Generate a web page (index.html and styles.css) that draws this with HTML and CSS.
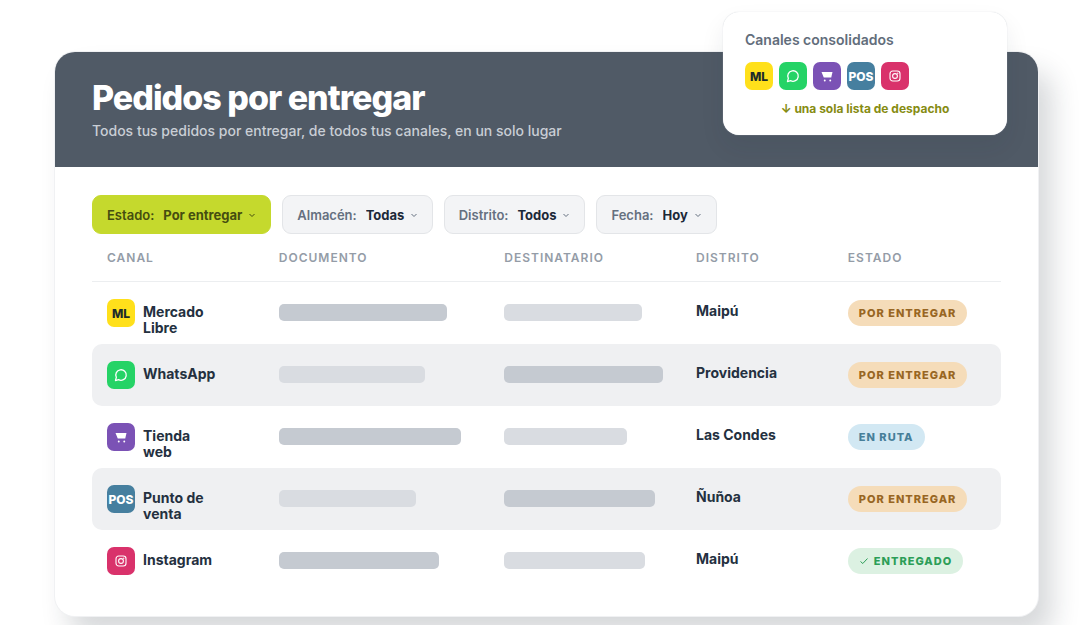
FILE: index.html
```html
<!DOCTYPE html>
<html lang="es">
<head>
    <meta charset="UTF-8">
    <meta name="viewport" content="width=device-width, initial-scale=1">
    <title>Pedidos por entregar</title>
    <link rel="stylesheet" href="styles.css">
</head>
<body>

<!-- iconos compartidos -->
<svg class="sprite" aria-hidden="true">
    <symbol id="chat" viewBox="0 0 24 24">
        <path d="M7.900 20A9 9 0 1 0 4 16.100L2.500 21.500Z" fill="none" stroke="currentColor" stroke-width="2.200" stroke-linejoin="round"/>
    </symbol>
    <symbol id="cart" viewBox="0 0 24 24">
        <path d="M1 4h22l-2.500 11H5.500z" fill="currentColor"/>
        <circle cx="7.500" cy="21" r="1.900" fill="currentColor"/>
        <circle cx="18.500" cy="21" r="1.900" fill="currentColor"/>
    </symbol>
    <symbol id="camera" viewBox="0 0 24 24">
        <g fill="none" stroke="currentColor" stroke-width="2.200">
            <rect x="2" y="2" width="20" height="20" rx="5.500"/>
            <circle cx="12" cy="12" r="4.800"/>
        </g>
        <circle cx="17.500" cy="6.500" r="1.300" fill="currentColor"/>
    </symbol>
    <symbol id="chevron" viewBox="0 0 8 8">
        <path d="M1.500 3L4 5.500L6.500 3" fill="none" stroke="currentColor" stroke-width="1"/>
    </symbol>
    <symbol id="check" viewBox="0 0 10 10">
        <path d="M1.500 5.500L3.800 7.500L8.500 2.500" fill="none" stroke="currentColor" stroke-width="1"/>
    </symbol>
</svg>

<main class="card">
    <header class="card-header">
        <h1>Pedidos por entregar</h1>
        <p>Todos tus pedidos por entregar, de todos tus canales, en un solo lugar</p>
    </header>

    <aside class="channels">
        <h2>Canales consolidados</h2>
        <div class="channel-list">
            <span class="icon ml">ML</span>
            <span class="icon wa"><svg><use href="#chat"/></svg></span>
            <span class="icon web"><svg><use href="#cart"/></svg></span>
            <span class="icon pos">POS</span>
            <span class="icon ig"><svg><use href="#camera"/></svg></span>
        </div>
        <p>↓ una sola lista de despacho</p>
    </aside>

    <div class="card-body">
        <form class="filters">
            <div class="filter active">
                <label for="estado">Estado:</label>
                <select id="estado"><option>Por entregar</option></select>
                <svg><use href="#chevron"/></svg>
            </div>
            <div class="filter">
                <label for="almacen">Almacén:</label>
                <select id="almacen"><option>Todas</option></select>
                <svg><use href="#chevron"/></svg>
            </div>
            <div class="filter">
                <label for="distrito">Distrito:</label>
                <select id="distrito"><option>Todos</option></select>
                <svg><use href="#chevron"/></svg>
            </div>
            <div class="filter">
                <label for="fecha">Fecha:</label>
                <select id="fecha"><option>Hoy</option></select>
                <svg><use href="#chevron"/></svg>
            </div>
        </form>

        <table class="orders">
            <thead>
                <tr>
                    <th class="col-canal">Canal</th>
                    <th class="col-documento">Documento</th>
                    <th class="col-destinatario">Destinatario</th>
                    <th class="col-distrito">Distrito</th>
                    <th class="col-estado">Estado</th>
                </tr>
            </thead>
            <tbody>
                <tr>
                    <td><div class="channel"><span class="icon ml">ML</span><span class="name">Mercado Libre</span></div></td>
                    <td><div class="bar dark" style="width: 86%"></div></td>
                    <td><div class="bar" style="width: 85%"></div></td>
                    <td><div class="district">Maipú</div></td>
                    <td><span class="badge pending">Por entregar</span></td>
                </tr>
                <tr>
                    <td><div class="channel"><span class="icon wa"><svg><use href="#chat"/></svg></span><span class="name">WhatsApp</span></div></td>
                    <td><div class="bar" style="width: 75%"></div></td>
                    <td><div class="bar dark" style="width: 98%"></div></td>
                    <td><div class="district">Providencia</div></td>
                    <td><span class="badge pending">Por entregar</span></td>
                </tr>
                <tr>
                    <td><div class="channel"><span class="icon web"><svg><use href="#cart"/></svg></span><span class="name">Tienda web</span></div></td>
                    <td><div class="bar dark" style="width: 93%"></div></td>
                    <td><div class="bar" style="width: 76%"></div></td>
                    <td><div class="district">Las Condes</div></td>
                    <td><span class="badge route">En ruta</span></td>
                </tr>
                <tr>
                    <td><div class="channel"><span class="icon pos">POS</span><span class="name">Punto de venta</span></div></td>
                    <td><div class="bar" style="width: 70%"></div></td>
                    <td><div class="bar dark" style="width: 93%"></div></td>
                    <td><div class="district">Ñuñoa</div></td>
                    <td><span class="badge pending">Por entregar</span></td>
                </tr>
                <tr>
                    <td><div class="channel"><span class="icon ig"><svg><use href="#camera"/></svg></span><span class="name">Instagram</span></div></td>
                    <td><div class="bar dark" style="width: 82%"></div></td>
                    <td><div class="bar" style="width: 87%"></div></td>
                    <td><div class="district">Maipú</div></td>
                    <td><span class="badge done"><svg><use href="#check"/></svg>Entregado</span></td>
                </tr>
            </tbody>
        </table>
    </div>
</main>

</body>
</html>
```
FILE: styles.css
```css
*{
    margin: 0;
    padding: 0;
    box-sizing: border-box;
}
body{
    min-height: 100vh;
    padding: 52px 42px 9px 55px;
    background: white;
    color: #243040;
    font-family: Inter, "Liberation Sans", sans-serif;
}
.sprite{
    display: none;
}
.card{
    position: relative;
    border-radius: 20px;
    background: white;
    box-shadow: 0 0 0 1px #f0f1f3, 14px 20px 28px rgba(30, 40, 50, .18);
}
.card-header{
    height: 115px;
    padding: 24px 37px;
    border-radius: 20px 20px 0 0;
    background: #505a66;
}
.card-header h1{
    font-size: 34px;
    line-height: 44px;
    font-weight: 800;
    letter-spacing: -1px;
    color: white;
}
.card-header p{
    font-size: 14px;
    line-height: 22px;
    font-weight: 500;
    color: #c9ced5;
}

/* panel flotante de canales */
.channels{
    position: absolute;
    top: -40px;
    right: 31px;
    width: 284px;
    padding: 18px 22px 16px;
    border-radius: 16px;
    background: white;
    box-shadow: 0 0 1px #c5cad1, 0 12px 24px rgba(30, 40, 50, .08);
}
.channels h2{
    font-size: 14px;
    line-height: 20px;
    font-weight: 600;
    color: #626d7b;
}
.channel-list{
    display: flex;
    gap: 6px;
    margin: 12px 0 9px;
}
.channels p{
    font-size: 12px;
    line-height: 20px;
    font-weight: 700;
    text-align: center;
    color: #868c12;
}
.icon{
    display: flex;
    flex: none;
    align-items: center;
    justify-content: center;
    width: 28px;
    height: 28px;
    border-radius: 7px;
    font-size: 12px;
    font-weight: 800;
    color: white;
}
.icon svg{
    width: 14px;
    height: 14px;
}
.ml{
    background: #ffe01b;
    color: #1d2b2b;
}
.wa{
    background: #25d366;
}
.web{
    background: #7b52b5;
}
.web svg{
    width: 12px;
    height: 12px;
}
.pos{
    background: #467f9f;
}
.ig{
    background: #d9326b;
}
.ig svg{
    width: 12px;
    height: 12px;
}

.card-body{
    padding: 28px 37px 24px;
}
.filters{
    display: flex;
    flex-wrap: wrap;
    gap: 11px;
}
.filter{
    display: flex;
    align-items: center;
    height: 39px;
    padding: 0 14px;
    border: 1px solid #e3e5e8;
    border-radius: 9px;
    background: #f3f4f6;
    color: #657080;
}
.filter label{
    margin-right: 9px;
    font-size: 13px;
    font-weight: 600;
}
.filter select{
    appearance: none;
    border: 0;
    background: none;
    font: 700 13px Inter, "Liberation Sans", sans-serif;
    color: #1c2838;
}
.filter svg{
    width: 8px;
    height: 8px;
    margin-left: 5px;
}
.filter.active{
    border-color: #c5d92d;
    background: #c5d92d;
    color: #454d10;
}
.filter.active select{
    color: #454d10;
}

.orders{
    width: 100%;
    table-layout: fixed;
    border-spacing: 0;
}
.orders th{
    height: 48px;
    padding: 1px 15px 0;
    border-bottom: 1px solid #eceef0;
    font-size: 12px;
    line-height: 46px;
    font-weight: 600;
    letter-spacing: 1px;
    text-align: left;
    text-transform: uppercase;
    color: #949ca7;
}
.col-canal{
    width: 18.9%;
}
.col-documento{
    width: 24.8%;
}
.col-destinatario{
    width: 21.1%;
}
.col-distrito{
    width: 16.7%;
}
.col-estado{
    width: 18.5%;
}
.orders td{
    height: 62px;
    padding: 17px 15px 7px;
    vertical-align: top;
}
.orders tbody tr:nth-child(even) td{
    background: #eff0f2;
}
.orders td:first-child{
    border-radius: 10px 0 0 10px;
}
.orders td:last-child{
    border-radius: 0 10px 10px 0;
    white-space: nowrap;
}
.channel{
    display: flex;
    gap: 8px;
}
.name{
    max-width: 76px;
    padding-top: 5px;
    font-size: 14px;
    line-height: 16px;
    font-weight: 700;
}
.bar{
    height: 17px;
    margin-top: 5px;
    border-radius: 5px;
    background: #d9dce1;
}
.bar.dark{
    background: #c5cad1;
}
.district{
    padding-top: 4px;
    font-size: 14px;
    line-height: 16px;
    font-weight: 700;
}
.badge{
    display: flex;
    align-items: center;
    gap: 5px;
    width: fit-content;
    height: 26px;
    margin-top: 1px;
    padding: 0 11px;
    border-radius: 13px;
    font-size: 11px;
    font-weight: 800;
    letter-spacing: 1px;
    text-transform: uppercase;
}
.badge svg{
    width: 10px;
    height: 10px;
}
.pending{
    background: #f5dcb9;
    color: #986623;
}
.route{
    background: #d2e8f3;
    color: #477f99;
}
.done{
    background: #dcf1e2;
    color: #2c9e58;
}
```
